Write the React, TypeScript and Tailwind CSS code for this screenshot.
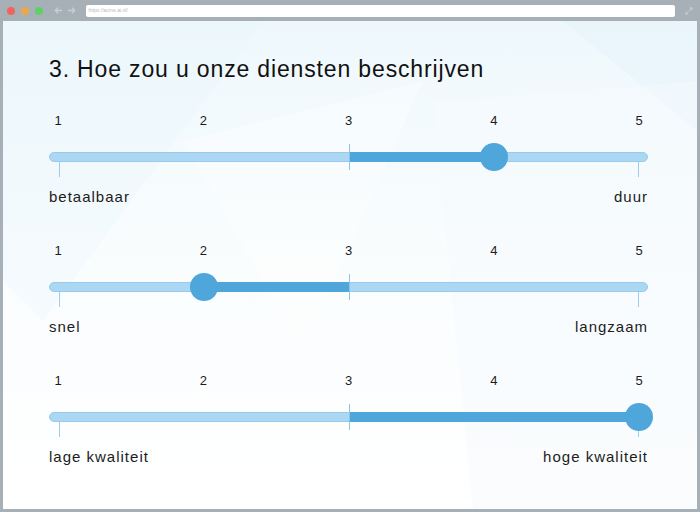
import React from "react";

type Scale = {
  value: number;
  left: string;
  right: string;
};

const scales: Scale[] = [
  { value: 4, left: "betaalbaar", right: "duur" },
  { value: 2, left: "snel", right: "langzaam" },
  { value: 5, left: "lage kwaliteit", right: "hoge kwaliteit" },
];

// track pixel positions of the 5 steps (relative to the track's padding box)
const stepX = (v: number) => 9 + 145 * (v - 1);
const MID = stepX(3);

function BrowserBar() {
  return (
    <div className="h-[21px] flex items-center px-[7px] gap-[6px]">
      <span className="w-[8px] h-[8px] rounded-full bg-[#f2625e]" />
      <span className="w-[8px] h-[8px] rounded-full bg-[#e9a94b]" />
      <span className="w-[8px] h-[8px] rounded-full bg-[#5fd068]" />
      <div className="flex items-center gap-[4px] ml-[5px] text-[#c8ced3]">
        <svg width="9" height="9" viewBox="0 0 10 10" fill="none" stroke="currentColor" strokeWidth="1.6">
          <path d="M9 5H1.5M4.5 1.8L1.5 5l3 3.2" />
        </svg>
        <svg width="9" height="9" viewBox="0 0 10 10" fill="none" stroke="currentColor" strokeWidth="1.6">
          <path d="M1 5h7.5M5.5 1.8L8.5 5l-3 3.2" />
        </svg>
      </div>
      <div className="ml-[4px] h-[12px] w-[601px] bg-white rounded-[2px] flex items-center pl-[3px] text-[5px] text-[#b4bbc1] font-['Liberation_Sans',sans-serif]">
        https://acme.ai.nl/
      </div>
      <svg className="ml-[4px]" width="8" height="8" viewBox="0 0 10 10" fill="none" stroke="#c3c9ce" strokeWidth="1.3">
        <path d="M6 1h3v3M9 1L5.5 4.5M4 9H1V6M1 9l3.5-3.5" />
      </svg>
    </div>
  );
}

function Slider({ scale }: { scale: Scale }) {
  const thumb = stepX(scale.value);
  const fillLeft = Math.min(thumb, MID);
  const fillWidth = Math.abs(thumb - MID);
  return (
    <div>
      <div className="flex justify-between px-[9px] h-[16px] leading-[16px] text-[13px] text-[#1c1c1c]">
        {[1, 2, 3, 4, 5].map((n) => (
          <span key={n} className="w-0 flex justify-center">
            {n}
          </span>
        ))}
      </div>
      <div className="relative mt-[23px] h-[10px] rounded-full bg-[#acd7f2] border border-[#98cbed]">
        <span className="absolute left-[9px] top-[9px] w-px h-[15px] bg-[#9ccdee]" />
        <span className="absolute left-[588px] top-[9px] w-px h-[15px] bg-[#9ccdee]" />
        <span
          className="absolute top-[-1px] h-[10px] bg-[#4ea6da]"
          style={{ left: fillLeft, width: fillWidth }}
        />
        <span className="absolute left-[299px] top-[-9px] w-px h-[26px] bg-[#8fc3e6]" />
        <span
          className="absolute top-[-10px] w-[28px] h-[28px] -ml-[14px] rounded-full bg-[#4ea6da]"
          style={{ left: thumb }}
        />
      </div>
      <div className="flex justify-between mt-[26px] h-[18px] leading-[18px] text-[15px] tracking-[1px] text-[#1c1c1c]">
        <span>{scale.left}</span>
        <span>{scale.right}</span>
      </div>
    </div>
  );
}

export default function App() {
  return (
    <div className="w-[700px] h-[512px] bg-[#a7b0b7] flex flex-col font-['Liberation_Sans',Arial,sans-serif] overflow-hidden">
      <BrowserBar />
      <div className="relative flex-1 mx-[3px] mb-[3px] bg-gradient-to-b from-[#eef8fc] via-[#fafdfe] to-[#ffffff] overflow-hidden">
        <svg className="absolute inset-0" width="694" height="488" viewBox="0 0 694 488">
          <polygon points="0,0 260,0 40,300 0,260" fill="#e8f5fb" opacity="0.3" />
          <polygon points="560,0 694,0 694,110" fill="#e3f2fa" opacity="0.45" />
          <polygon points="430,80 694,60 694,488 470,488" fill="#f5fafd" opacity="0.5" />
          <polygon points="180,120 420,60 300,330" fill="#ffffff" opacity="0.35" />
        </svg>
        <div className="relative pl-[46px] pr-[46px] pt-[34px]">
          <h1 className="h-[28px] leading-[28px] text-[23px] tracking-[0.85px] text-[#111] whitespace-nowrap">
            3. Hoe zou u onze diensten beschrijven
          </h1>
          <div className="mt-[30px] flex flex-col gap-[37px] w-[599px]">
            {scales.map((s) => (
              <Slider key={s.left} scale={s} />
            ))}
          </div>
        </div>
      </div>
    </div>
  );
}
